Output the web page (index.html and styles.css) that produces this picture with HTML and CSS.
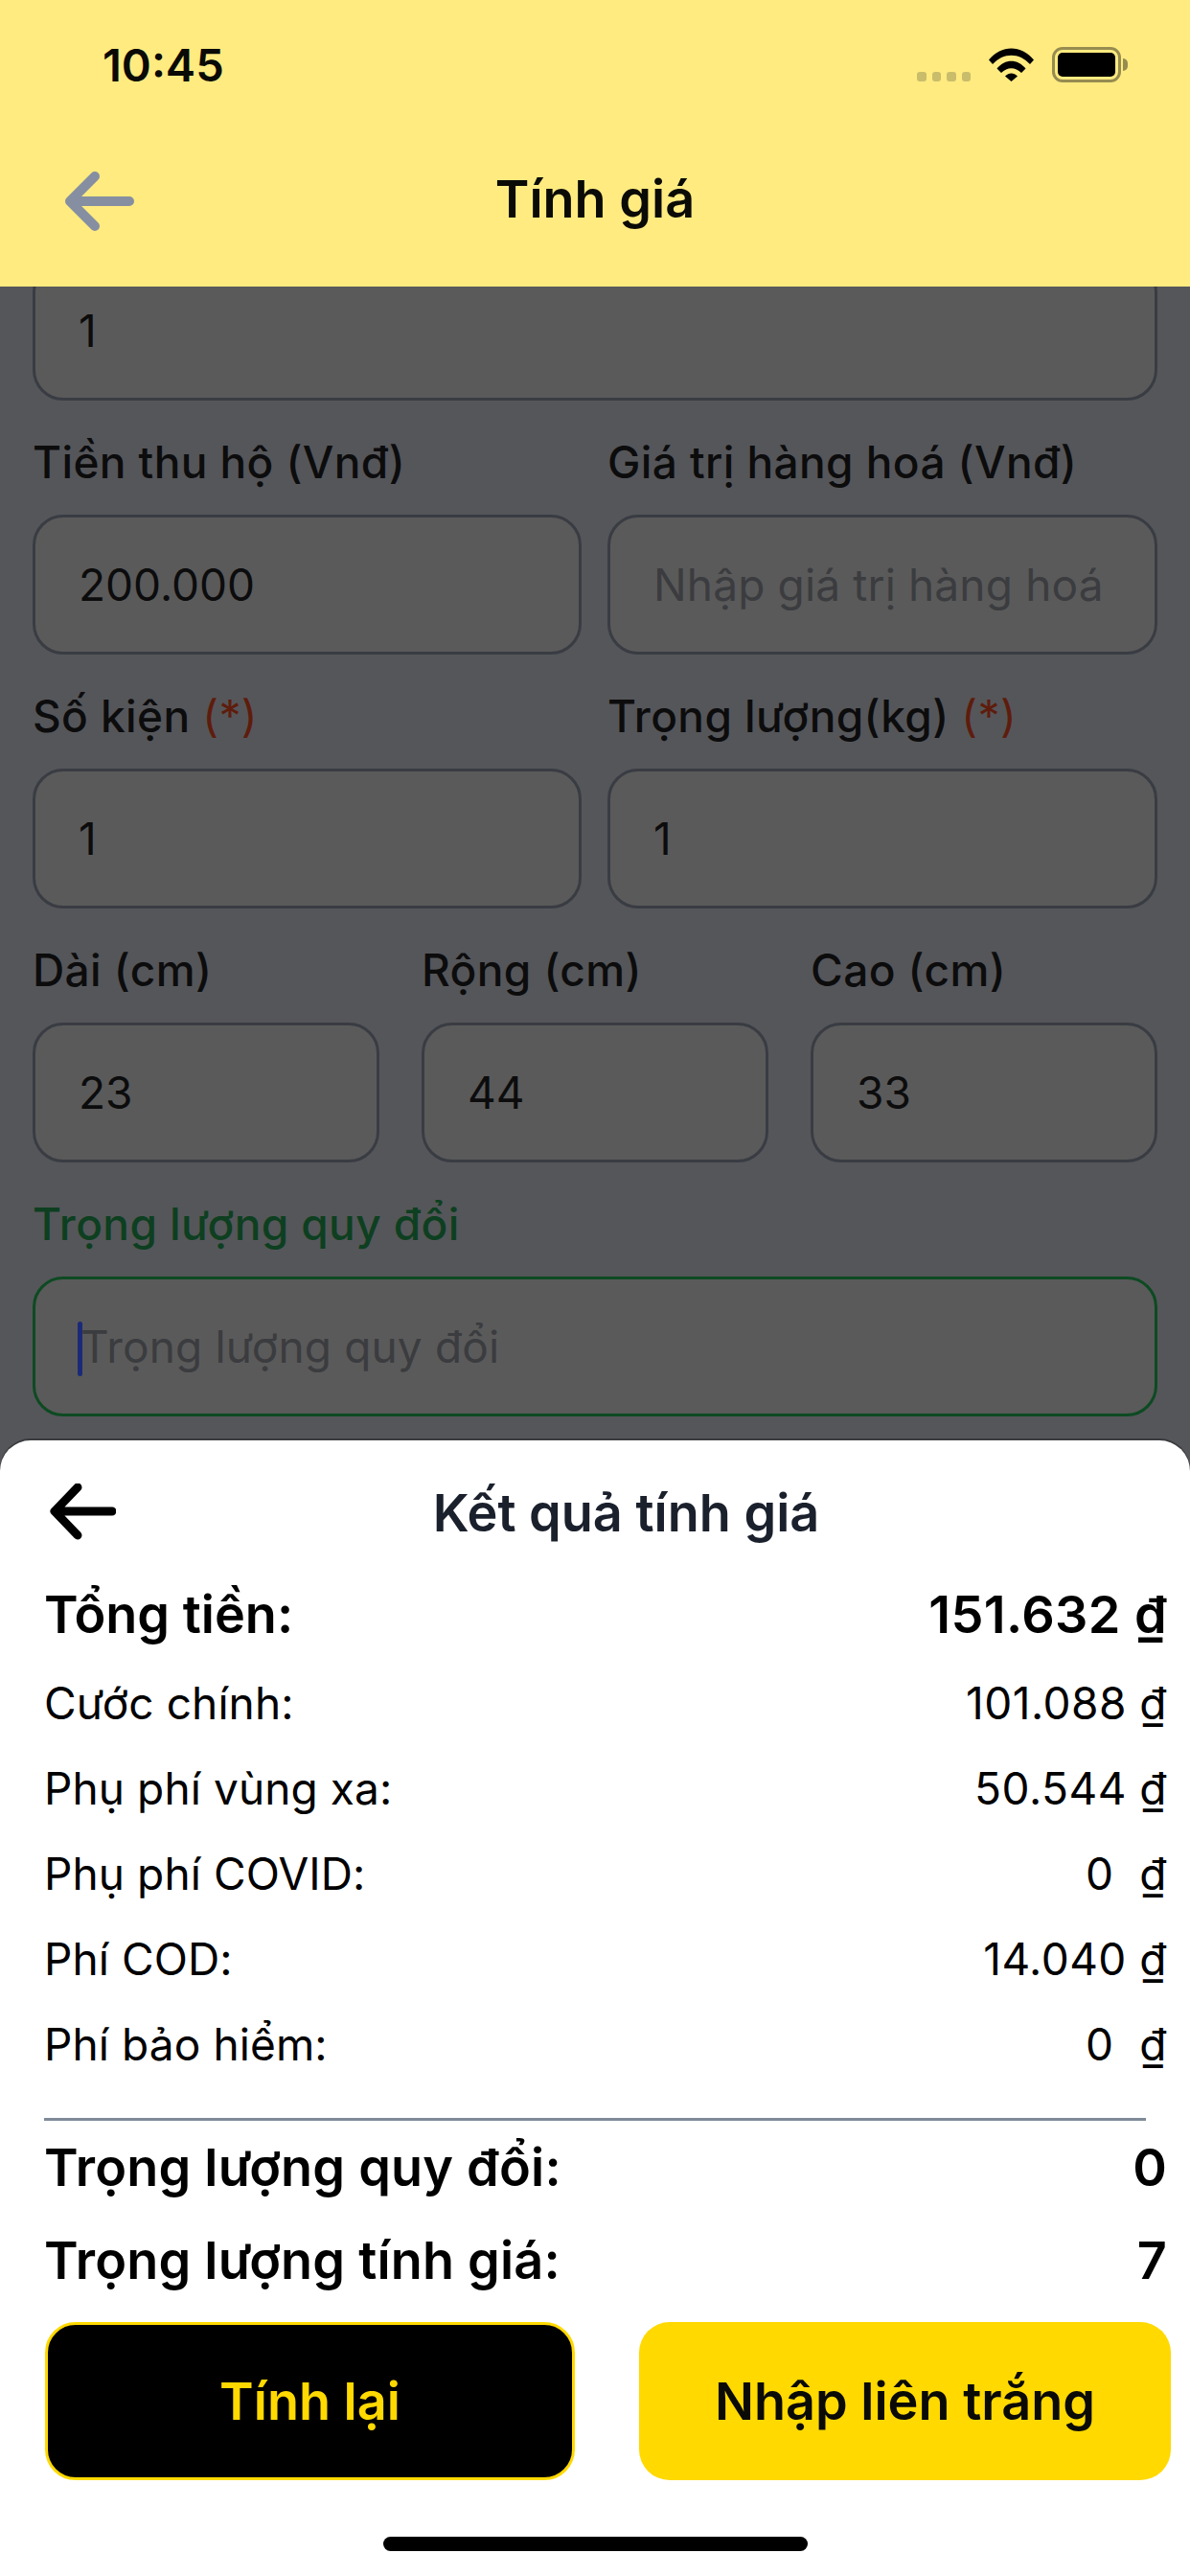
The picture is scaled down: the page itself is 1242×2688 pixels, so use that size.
FILE: index.html
```html
<!DOCTYPE html>
<html lang="vi">
<head>
<meta charset="utf-8">
<title>Tính giá</title>
<link rel="stylesheet" href="styles.css">
</head>
<body>
<div class="app">
  <header class="topbar">
    <div class="status">
      <span class="time">10:45</span>
      <div class="status-icons">
        <div class="signal"><i></i><i></i><i></i><i></i></div>
        <svg class="wifi" viewBox="0 0 47 36" aria-hidden="true">
          <path d="M0 13.5C13-2.5 34-2.5 47 13.5L43 18C32 5.5 15 5.5 4 18Z"/>
          <path d="M8.5 22.5C17 12 30 12 38.500 22.500L34 27C27.500 20.500 19.500 20.500 13 27Z"/>
          <path d="M17 30.500C21 26.500 26 26.500 30 30.500L23.500 36Z"/>
        </svg>
        <div class="battery"><div class="battery-fill"></div></div>
        <div class="battery-nub"></div>
      </div>
    </div>
    <div class="navbar">
      <svg class="nav-back" viewBox="0 0 74 64" aria-hidden="true"><path d="M69 32H7M33 6 7 32l26 26"/></svg>
      <h1 class="nav-title">Tính giá</h1>
    </div>
  </header>

  <main class="form">
    <div class="input input-first"><span class="value">1</span></div>
    <div class="row two">
      <div class="field"><label class="label">Tiền thu hộ (Vnđ)</label><div class="input"><span class="value">200.000</span></div></div>
      <div class="field"><label class="label">Giá trị hàng hoá (Vnđ)</label><div class="input"><span class="placeholder">Nhập giá trị hàng hoá</span></div></div>
    </div>
    <div class="row two">
      <div class="field"><label class="label">Số kiện <span class="req">(*)</span></label><div class="input"><span class="value">1</span></div></div>
      <div class="field"><label class="label">Trọng lượng(kg) <span class="req">(*)</span></label><div class="input"><span class="value">1</span></div></div>
    </div>
    <div class="row three">
      <div class="field"><label class="label">Dài (cm)</label><div class="input"><span class="value">23</span></div></div>
      <div class="field"><label class="label">Rộng (cm)</label><div class="input"><span class="value">44</span></div></div>
      <div class="field"><label class="label">Cao (cm)</label><div class="input"><span class="value">33</span></div></div>
    </div>
    <div class="row">
      <div class="field"><label class="label label-focus">Trọng lượng quy đổi</label><div class="input input-focus"><span class="caret"></span><span class="placeholder">Trọng lượng quy đổi</span></div></div>
    </div>
  </main>

  <section class="sheet">
    <div class="sheet-head">
      <svg class="sheet-back" viewBox="0 0 70 60" aria-hidden="true"><path d="M66 29H6M30 4 6 29l24 25"/></svg>
      <h2 class="sheet-title">Kết quả tính giá</h2>
    </div>
    <div class="line line-total"><span>Tổng tiền:</span><span class="num">151.632 ₫</span></div>
    <div class="line line-fee"><span>Cước chính:</span><span class="num">101.088 ₫</span></div>
    <div class="line line-fee"><span>Phụ phí vùng xa:</span><span class="num">50.544 ₫</span></div>
    <div class="line line-fee"><span>Phụ phí COVID:</span><span class="num">0  ₫</span></div>
    <div class="line line-fee"><span>Phí COD:</span><span class="num">14.040 ₫</span></div>
    <div class="line line-fee"><span>Phí bảo hiểm:</span><span class="num">0  ₫</span></div>
    <hr class="divider">
    <div class="line line-weight"><span>Trọng lượng quy đổi:</span><span>0</span></div>
    <div class="line line-weight"><span>Trọng lượng tính giá:</span><span>7</span></div>
    <div class="actions">
      <button class="btn btn-dark" type="button">Tính lại</button>
      <button class="btn btn-yellow" type="button">Nhập liên trắng</button>
    </div>
    <div class="home"></div>
  </section>
</div>
</body>
</html>
```
FILE: styles.css
```css
* { box-sizing: border-box; }
html, body { margin: 0; padding: 0; }
body {
  width: 1242px;
  height: 2688px;
  overflow: hidden;
  background: #55565a;
  font-family: Inter, "Noto Sans", sans-serif;
  color: #0c0c0d;
}
.app {
  position: relative;
  width: 1242px;
  height: 2688px;
  overflow: hidden;
  display: flex;
  flex-direction: column;
}

/* Top bar */
.topbar {
  position: relative;
  z-index: 2;
  flex: none;
  height: 299px;
  background: #ffeb80;
  display: flex;
  flex-direction: column;
}
.status {
  height: 136px;
  padding: 0 65px 0 107px;
  display: flex;
  justify-content: space-between;
  align-items: flex-start;
}
.time {
  margin-top: 38px;
  font-size: 47px;
  font-weight: 600;
  line-height: 60px;
  color: #0a0a06;
}
.status-icons {
  display: flex;
  align-items: flex-start;
  margin-top: 49px;
}
.signal {
  display: flex;
  gap: 6px;
  margin-top: 26px;
  margin-right: 19px;
}
.signal i {
  width: 9.5px;
  height: 10px;
  border-radius: 3px;
  background: #c9bd6b;
}
.wifi {
  width: 47px;
  height: 36px;
  margin-right: 19px;
  fill: #000;
}
.battery {
  width: 72px;
  height: 37px;
  border: 3px solid #968c50;
  border-radius: 11px;
  padding: 3px;
}
.battery-fill {
  width: 100%;
  height: 100%;
  background: #000;
  border-radius: 5px;
}
.battery-nub {
  width: 5px;
  height: 13px;
  margin-top: 12px;
  margin-left: 2px;
  background: #968c50;
  border-radius: 0 6px 6px 0;
}
.navbar {
  flex: 1;
  position: relative;
  display: flex;
  align-items: center;
  justify-content: center;
  padding-bottom: 19px;
}
.nav-back {
  position: absolute;
  left: 66px;
  top: 42px;
  width: 74px;
  height: 64px;
  fill: none;
  stroke: #868fa1;
  stroke-width: 10;
  stroke-linecap: round;
  stroke-linejoin: round;
}
.nav-title {
  margin: 0;
  font-size: 54px;
  font-weight: 600;
  line-height: 60px;
  color: #0a0a06;
}

/* Dimmed form */
.form {
  flex: 1;
  margin-top: -27px;
  padding: 0 34px;
  display: flex;
  flex-direction: column;
  gap: 34px;
}
.row { display: grid; gap: 27px; }
.row.two { grid-template-columns: 573px 574px; }
.row.three { grid-template-columns: repeat(3, 362px); gap: 44px; }
.field { display: flex; flex-direction: column; gap: 25px; }
.label {
  font-size: 46px;
  font-weight: 500;
  letter-spacing: 0.4px;
  line-height: 60px;
  color: #0c0c0d;
  white-space: nowrap;
}
.req { color: #5e1c0c; font-weight: 400; }
.label-focus { color: #0d3f20; }
.input {
  height: 146px;
  border: 3px solid #393c43;
  border-radius: 32px;
  background: #5a5a5a;
  padding: 0 45px;
  display: flex;
  align-items: center;
  font-size: 46px;
  line-height: 60px;
  white-space: nowrap;
}
.input-focus { border-color: #0d4a22; position: relative; padding-left: 47px; }
.value { color: #0c0c0d; }
.placeholder { color: #3b3c3f; letter-spacing: 0.15px; }
.caret {
  position: absolute;
  left: 44px;
  top: 44px;
  width: 5px;
  height: 57px;
  border-radius: 3px;
  background: #1b2a78;
}

/* Bottom sheet */
.sheet {
  position: absolute;
  z-index: 3;
  left: 0;
  right: 0;
  bottom: 0;
  height: 1185px;
  background: #fff;
  border-radius: 32px 32px 0 0;
  box-shadow: 0 -2px 0 #3a3b3e;
  padding: 46px 24px 0 46px;
  display: flex;
  flex-direction: column;
}
.sheet-head {
  position: relative;
  height: 60px;
  display: flex;
  justify-content: center;
  padding-left: 65px;
  margin-right: 22px;
}
.sheet-back {
  position: absolute;
  left: 5px;
  top: -1px;
  width: 70px;
  height: 60px;
  fill: none;
  stroke: #000;
  stroke-width: 9;
  stroke-linecap: round;
  stroke-linejoin: round;
}
.sheet-title {
  margin: 0;
  font-size: 54px;
  font-weight: 600;
  line-height: 60px;
  color: #1a202c;
}
.line {
  display: flex;
  justify-content: space-between;
  line-height: 60px;
  white-space: pre;
  color: #000;
}
.line-total { font-size: 54px; font-weight: 600; margin-top: 46px; }
.line-total .num { letter-spacing: 0.4px; }
.line-fee { font-size: 46px; font-weight: 400; margin-top: 29px; letter-spacing: 0.1px; }
.line-fee .num { letter-spacing: 0.5px; }
.line-total + .line-fee { margin-top: 32px; }
.divider {
  width: 1150px;
  height: 3px;
  margin: 47px 0 19px 0;
  border: 0;
  background: #7f8a99;
}
.line-weight { font-size: 54px; font-weight: 600; letter-spacing: 0.2px; }
.line-weight + .line-weight { margin-top: 37px; }
.actions {
  display: flex;
  justify-content: space-between;
  margin: 34px -4px 0 1px;
  height: 165px;
}
.btn {
  width: 553px;
  height: 165px;
  border-radius: 32px;
  font-family: inherit;
  font-size: 54px;
  font-weight: 600;
  padding: 0;
}
.btn-dark { background: #000; color: #ffd900; border: 3px solid #ffd900; }
.btn-yellow { width: 555px; background: #ffd900; color: #0a0a06; border: 0; }
.home {
  width: 443px;
  height: 15px;
  margin: 59px 0 0 354px;
  border-radius: 8px;
  background: #000;
}
```
